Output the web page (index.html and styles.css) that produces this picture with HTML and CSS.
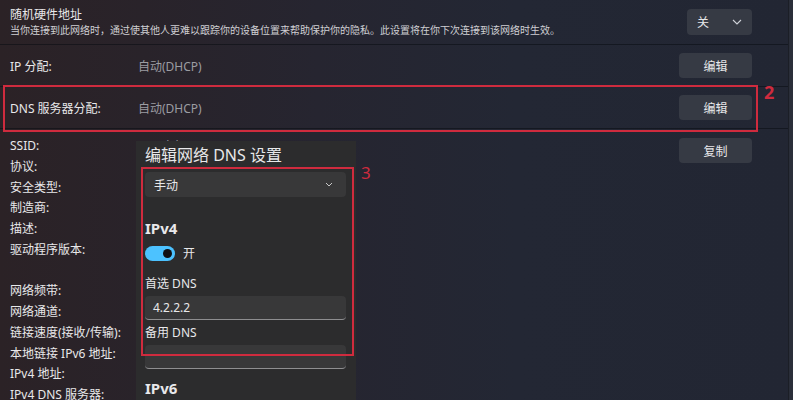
FILE: index.html
```html
<!DOCTYPE html>
<html lang="zh-CN">
<head>
    <meta charset="UTF-8">
    <meta name="viewport" content="width=device-width, initial-scale=1.0">
    <title>网络属性 - 编辑 DNS</title>
    <link rel="stylesheet" href="styles.css">
</head>
<body>
    <div class="screen">
        <main class="settings">
            <div class="row row-mac">
                <div class="row-text">
                    <div class="row-title">随机硬件地址</div>
                    <div class="row-desc">当你连接到此网络时，通过使其他人更难以跟踪你的设备位置来帮助保护你的隐私。此设置将在你下次连接到该网络时生效。</div>
                </div>
                <button class="combo">
                    <span>关</span>
                    <svg width="10" height="6" viewBox="0 0 10 6"><path d="M1 1l4 4 4-4" fill="none" stroke="#cfd2d8" stroke-width="1.1"/></svg>
                </button>
            </div>
            <div class="row row-ip">
                <span class="label">IP 分配:</span>
                <span class="value">自动(DHCP)</span>
                <button class="btn">编辑</button>
            </div>
            <div class="row row-dns">
                <span class="label">DNS 服务器分配:</span>
                <span class="value">自动(DHCP)</span>
                <button class="btn">编辑</button>
            </div>
            <div class="props">
                <div class="prop-list">
                    <span class="label">SSID:</span><span class="value">MyWiFi-5G</span>
                    <span class="label">协议:</span><span class="value"></span>
                    <span class="label">安全类型:</span><span class="value"></span>
                    <span class="label">制造商:</span><span class="value"></span>
                    <span class="label">描述:</span><span class="value"></span>
                    <span class="label">驱动程序版本:</span><span class="value"></span>
                    <span class="label">&nbsp;</span><span class="value"></span>
                    <span class="label">网络频带:</span><span class="value"></span>
                    <span class="label">网络通道:</span><span class="value"></span>
                    <span class="label">链接速度(接收/传输):</span><span class="value"></span>
                    <span class="label">本地链接 IPv6 地址:</span><span class="value"></span>
                    <span class="label">IPv4 地址:</span><span class="value"></span>
                    <span class="label">IPv4 DNS 服务器:</span><span class="value"></span>
                </div>
                <button class="btn">复制</button>
            </div>
        </main>
        <div class="rail"></div>

        <!-- dialog over the property list -->
        <section class="dialog">
            <h2 class="dialog-title">编辑网络 DNS 设置</h2>
            <div class="dropdown">
                <span>手动</span>
                <svg width="8" height="5" viewBox="0 0 8 5"><path d="M1 1l3 3 3-3" fill="none" stroke="#c8c8c8" stroke-width="1"/></svg>
            </div>
            <h3 class="section-title">IPv4</h3>
            <div class="toggle-row">
                <span class="toggle"><span class="knob"></span></span>
                <span>开</span>
            </div>
            <div class="field-label">首选 DNS</div>
            <div class="input">4.2.2.2</div>
            <div class="field-label field-label-next">备用 DNS</div>
            <div class="input"></div>
            <h3 class="section-title section-v6">IPv6</h3>
        </section>

        <!-- annotation marks -->
        <div class="mark mark-dns"></div>
        <span class="mark-num mark-num-2">2</span>
        <div class="mark mark-dialog"></div>
        <span class="mark-num mark-num-3">3</span>
    </div>
</body>
</html>
```

FILE: styles.css
```css
:root {
    --text: #e8e8ea;
    --muted: #9c9ca2;
    --line: rgba(10, 12, 18, 0.55);
    --btn: #363a44;
    --mark: #cf2b3e;
    --field: #383839;
}

* {
    margin: 0;
    padding: 0;
    box-sizing: border-box;
}

body {
    font-family: 'Noto Sans', 'Noto Sans CJK SC', sans-serif;
    color: var(--text);
    background: #232733;
    overflow: hidden;
}

.screen {
    position: relative;
    width: 793px;
    height: 400px;
    overflow: hidden;
    display: flex;
    background: linear-gradient(90deg, #2b2226 0%, #29232a 18%, #262530 40%, #232734 65%, #222633 100%);
}

.settings {
    width: 788px;
    display: flex;
    flex-direction: column;
}

.rail {
    flex: 1;
    border-left: 1px solid #1b1e26;
    background: #2a2e39;
}

button {
    font-family: inherit;
    border: none;
    color: var(--text);
}

.row {
    flex-shrink: 0;
    display: flex;
    align-items: center;
    padding: 0 36px 0 10px;
    border-bottom: 1px solid var(--line);
}

.row-mac {
    height: 45px;
}

.row-text {
    flex: 1;
}

.row-title {
    font-size: 12px;
    line-height: 16px;
}

.row-desc {
    font-size: 10px;
    line-height: 14px;
    color: #cfcfd3;
}

.combo {
    width: 65px;
    height: 26px;
    border-radius: 4px;
    background: var(--btn);
    display: flex;
    align-items: center;
    justify-content: space-between;
    padding: 0 10px;
    font-size: 12px;
    margin-top: -1px;
}

.row-ip {
    height: 42px;
}

.row-dns {
    height: 42px;
}

.label {
    width: 128px;
    font-size: 12px;
}

.value {
    flex: 1;
    font-size: 12px;
    color: var(--muted);
}

.btn {
    width: 73px;
    height: 25px;
    border-radius: 4px;
    background: var(--btn);
    font-size: 12px;
}

.props {
    flex-shrink: 0;
    display: flex;
    align-items: flex-start;
    padding: 7px 36px 0 10px;
}

.prop-list {
    flex: 1;
    display: grid;
    grid-template-columns: 128px 1fr;
    font-size: 12px;
    line-height: 20.75px;
}

.prop-list .label {
    white-space: nowrap;
}

.props .btn {
    margin-top: 2px;
}

/* dialog */
.dialog {
    position: absolute;
    left: 136px;
    top: 141px;
    width: 220px;
    bottom: 0;
    background: #2c2c2d;
    padding: 3px 10px 0 9px;
}

.dialog-title {
    font-size: 16px;
    font-weight: 400;
    line-height: 22px;
}

.dropdown {
    margin-top: 6px;
    height: 25px;
    border-radius: 4px;
    background: var(--field);
    display: flex;
    align-items: center;
    justify-content: space-between;
    padding: 0 13px 0 9px;
    font-size: 12px;
}

.section-title {
    margin-top: 21px;
    font-size: 15px;
    font-weight: 700;
    line-height: 20px;
}

.toggle-row {
    margin-top: 8px;
    display: flex;
    align-items: center;
    gap: 8px;
    font-size: 12px;
    line-height: 15px;
}

.toggle {
    width: 30px;
    height: 15px;
    border-radius: 8px;
    background: #4cc2ff;
    display: flex;
    align-items: center;
    justify-content: flex-end;
    padding-right: 3px;
}

.knob {
    width: 9px;
    height: 9px;
    border-radius: 50%;
    background: #101014;
}

.field-label {
    margin-top: 15px;
    font-size: 12px;
    line-height: 16px;
}

.field-label-next {
    margin-top: 5px;
}

.input {
    margin-top: 4px;
    height: 24px;
    border-radius: 4px;
    background: var(--field);
    border-bottom: 1px solid #8e8e90;
    padding-left: 8px;
    font-size: 12px;
    line-height: 23px;
}

.section-v6 {
    margin-top: 9px;
}

/* annotations */
.mark {
    position: absolute;
    border: 2px solid var(--mark);
}

.mark-dns {
    left: 3px;
    top: 85px;
    width: 755px;
    height: 47px;
}

.mark-dialog {
    left: 141px;
    top: 167px;
    width: 213px;
    height: 189px;
}

.mark-num {
    position: absolute;
    color: var(--mark);
    font-weight: 700;
    line-height: 1;
}

.mark-num-2 {
    left: 764px;
    top: 83px;
    font-size: 18px;
}

.mark-num-3 {
    left: 361px;
    top: 164px;
    font-size: 17px;
    font-weight: 400;
}
```
